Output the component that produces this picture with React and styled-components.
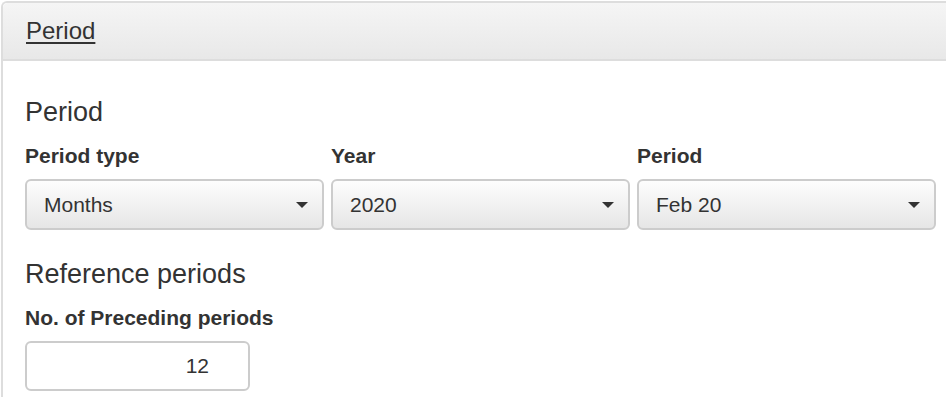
import React from 'react';
import styled, { createGlobalStyle } from 'styled-components';

const GlobalStyle = createGlobalStyle`
  html, body {
    margin: 0;
    padding: 0;
    background: #fff;
    overflow: hidden;
  }
  body {
    font-family: "Liberation Sans", Arial, Helvetica, sans-serif;
    color: #333;
  }
`;

const Page = styled.div`
  padding: 1px 0 0 1px;
  width: 1000px;
`;

const Panel = styled.div`
  border: 2px solid #ddd;
  border-right: none;
  border-radius: 6px 0 0 0;
  background: #fff;
`;

const PanelHeading = styled.div`
  height: 56px;
  padding: 0 23px;
  display: flex;
  align-items: center;
  background: linear-gradient(to bottom, #f5f5f5 0%, #e8e8e8 100%);
  border-bottom: 2px solid #ddd;
  border-radius: 5px 0 0 0;
`;

const PanelTitle = styled.a`
  font-size: 24px;
  line-height: 26px;
  color: #333;
  text-decoration: underline;
  text-decoration-thickness: 2px;
  text-underline-offset: 3px;
  cursor: pointer;
`;

const PanelBody = styled.div`
  padding: 36px 22px 20px;
`;

const Heading = styled.h4`
  font-size: 27px;
  line-height: 30px;
  font-weight: 400;
  margin: ${(p) => (p.$first ? '0' : '29px')} 0 14px;
`;

const Row = styled.div`
  display: grid;
  grid-template-columns: repeat(3, 299px);
  column-gap: 7px;
`;

const Field = styled.div`
  display: flex;
  flex-direction: column;
`;

const Label = styled.label`
  font-size: 21px;
  line-height: 30px;
  font-weight: 700;
  margin-bottom: 8px;
`;

const SelectBox = styled.div`
  box-sizing: border-box;
  height: 51px;
  padding: 0 14px 0 17px;
  display: flex;
  align-items: center;
  justify-content: space-between;
  border: 2px solid #ccc;
  border-radius: 6px;
  background: linear-gradient(to bottom, #fdfdfd 0%, #e6e6e6 100%);
  font-size: 21px;
  color: #333;
`;

const Caret = styled.span`
  width: 0;
  height: 0;
  border-left: 6px solid transparent;
  border-right: 6px solid transparent;
  border-top: 6px solid #333;
  margin-top: 1px;
`;

const NumberInput = styled.input`
  box-sizing: border-box;
  width: 225px;
  height: 50px;
  padding: 0 39px 0 18px;
  border: 2px solid #ccc;
  border-radius: 6px;
  font-family: "Liberation Sans", Arial, Helvetica, sans-serif;
  font-size: 21px;
  color: #333;
  text-align: right;
  outline: none;
`;

const Select = ({ value }) => (
  <SelectBox>
    <span>{value}</span>
    <Caret />
  </SelectBox>
);

const fields = [
  { label: 'Period type', value: 'Months' },
  { label: 'Year', value: '2020' },
  { label: 'Period', value: 'Feb 20' },
];

const App = () => {
  return (
    <Page>
      <GlobalStyle />
      <Panel>
        <PanelHeading>
          <PanelTitle>Period</PanelTitle>
        </PanelHeading>
        <PanelBody>
          <Heading $first>Period</Heading>
          <Row>
            {fields.map((f) => (
              <Field key={f.label}>
                <Label>{f.label}</Label>
                <Select value={f.value} />
              </Field>
            ))}
          </Row>
          <Heading>Reference periods</Heading>
          <Field>
            <Label>No. of Preceding periods</Label>
            <NumberInput type="text" defaultValue="12" />
          </Field>
        </PanelBody>
      </Panel>
    </Page>
  );
};

export default App;
